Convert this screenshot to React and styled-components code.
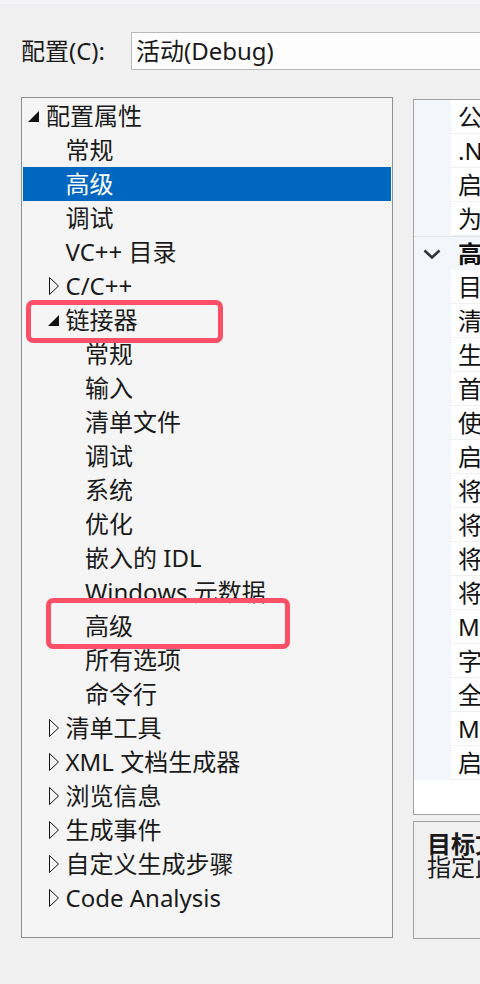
import React from "react";
import styled, { createGlobalStyle } from "styled-components";

const Global = createGlobalStyle`
  html, body { margin: 0; padding: 0; overflow: hidden; }
  body {
    background: #f0f0f0;
    font-family: "Noto Sans", "Noto Sans CJK SC", sans-serif;
    color: #1a1a1a;
  }
`;

const Page = styled.div`
  width: 480px;
  height: 984px;
  overflow: hidden;
  position: relative;
  display: flex;
  flex-direction: column;
`;

const TopStrip = styled.div`
  height: 4px;
  background: #f6f6f9;
`;

const ConfigRow = styled.div`
  display: flex;
  align-items: center;
  margin-top: 28px;
  padding-left: 21px;
  height: 38px;
  width: 720px;
`;

const Label = styled.div`
  width: 110px;
  font-size: 24px;
  line-height: 38px;
`;

const Input = styled.div`
  flex: 1;
  height: 36px;
  border: 1px solid #b9b9b9;
  background: #fdfdfd;
  font-size: 24px;
  line-height: 36px;
  padding-left: 4px;
`;

const Main = styled.div`
  display: flex;
  gap: 20px;
  margin-top: 27px;
  padding-left: 21px;
  width: 720px;
`;

const TreePanel = styled.div`
  flex: 0 0 372px;
  height: 841px;
  box-sizing: border-box;
  border: 1px solid #8e8f94;
  background: #f5f5f5;
  padding: 1px;
`;

const Row = styled.div`
  height: 34px;
  display: flex;
  align-items: center;
  padding-left: ${(p) => 4 + p.$level * 19.5}px;
  background: ${(p) => (p.$selected ? "#0067c0" : "transparent")};
  color: ${(p) => (p.$selected ? "#ffffff" : "#1a1a1a")};
  font-size: 24px;
  white-space: nowrap;
`;

const Expander = styled.span`
  width: 19px;
  flex: 0 0 19px;
  display: flex;
  align-items: center;
`;

const RowText = styled.span`
  line-height: 34px;
`;

const RightCol = styled.div`
  display: flex;
  flex-direction: column;
  gap: 6px;
  margin-top: 2px;
  width: 300px;
`;

const Grid = styled.div`
  height: 716px;
  box-sizing: border-box;
  border: 1px solid #a3a3a3;
  background: #ffffff;
  display: flex;
  flex-direction: column;
`;

const PropRow = styled.div`
  height: 34px;
  display: flex;
  box-sizing: border-box;
  border-top: ${(p) => (p.$header ? "1px solid #e3e3e3" : "none")};
  background: ${(p) => (p.$header ? "#f3f6fb" : "transparent")};
  font-size: 24px;
  font-weight: ${(p) => (p.$header ? 700 : 400)};
`;

const Gutter = styled.div`
  width: 37px;
  flex: 0 0 37px;
  background: #f3f6fb;
  display: flex;
  align-items: center;
  justify-content: center;
`;

const Cell = styled.div`
  flex: 1;
  padding-left: 7px;
  line-height: 33px;
  white-space: nowrap;
  overflow: hidden;
  border-bottom: ${(p) => (p.$header ? "none" : "1px solid #f0f0f0")};
  color: #111;
`;

const Desc = styled.div`
  height: 118px;
  box-sizing: border-box;
  border: 1px solid #a3a3a3;
  padding: 10px 0 0 13px;
  font-size: 24px;
  line-height: 23px;
  white-space: nowrap;
  overflow: hidden;
`;

const DescTitle = styled.div`
  font-weight: 700;
`;

const Mark = styled.div`
  position: absolute;
  left: ${(p) => p.$x}px;
  top: ${(p) => p.$y}px;
  width: ${(p) => p.$w}px;
  height: ${(p) => p.$h}px;
  box-sizing: border-box;
  border: 5px solid #fb5067;
  border-radius: 7px;
  pointer-events: none;
`;

const Filled = () => (
  <svg width="11" height="11" viewBox="0 0 11 11" style={{ marginLeft: 1 }}>
    <polygon points="11,0 11,11 0,11" fill="#111" />
  </svg>
);

const Outline = () => (
  <svg width="11" height="18" viewBox="0 0 11 18" style={{ marginLeft: 2 }}>
    <polygon points="0.5,0.5 9.5,9 0.5,17.5" fill="none" stroke="#111" strokeWidth="1" />
  </svg>
);

const Chevron = () => (
  <svg width="18" height="10" viewBox="0 0 18 10" style={{ marginLeft: -2 }}>
    <polyline points="1.5,1.5 9,8.5 16.5,1.5" fill="none" stroke="#333" strokeWidth="2.6" />
  </svg>
);

const tree = [
  { l: 0, t: "配置属性", e: "open" },
  { l: 1, t: "常规" },
  { l: 1, t: "高级", s: true },
  { l: 1, t: "调试" },
  { l: 1, t: "VC++ 目录" },
  { l: 1, t: "C/C++", e: "closed" },
  { l: 1, t: "链接器", e: "open" },
  { l: 2, t: "常规" },
  { l: 2, t: "输入" },
  { l: 2, t: "清单文件" },
  { l: 2, t: "调试" },
  { l: 2, t: "系统" },
  { l: 2, t: "优化" },
  { l: 2, t: "嵌入的 IDL" },
  { l: 2, t: "Windows 元数据" },
  { l: 2, t: "高级" },
  { l: 2, t: "所有选项" },
  { l: 2, t: "命令行" },
  { l: 1, t: "清单工具", e: "closed" },
  { l: 1, t: "XML 文档生成器", e: "closed" },
  { l: 1, t: "浏览信息", e: "closed" },
  { l: 1, t: "生成事件", e: "closed" },
  { l: 1, t: "自定义生成步骤", e: "closed" },
  { l: 1, t: "Code Analysis", e: "closed" },
];

const props = [
  { t: "公共语言运行时支持" },
  { t: ".NET 目标框架版本" },
  { t: "启用托管增量生成" },
  { t: "为 C++/CLI 属性启用 CLR 支持" },
  { t: "高级属性", h: true },
  { t: "目标文件扩展名" },
  { t: "清理时要删除的扩展名" },
  { t: "生成日志文件" },
  { t: "首选生成工具体系结构" },
  { t: "使用调试库" },
  { t: "启用 Unity (JUMBO) 生成" },
  { t: "将内容复制到 OutDir" },
  { t: "将项目引用复制到 OutDir" },
  { t: "将项目引用的符号复制到 OutDir" },
  { t: "将 C++ 运行时复制到输出目录" },
  { t: "MFC 的使用" },
  { t: "字符集" },
  { t: "全程序优化" },
  { t: "MSVC 工具集版本" },
  { t: "启用 MSVC 结构化输出" },
];

export default function App() {
  return (
    <>
      <Global />
      <Page>
        <TopStrip />
        <ConfigRow>
          <Label>配置(C):</Label>
          <Input>活动(Debug)</Input>
        </ConfigRow>
        <Main>
          <TreePanel>
            {tree.map((r, i) => (
              <Row key={i} $level={r.l} $selected={r.s}>
                <Expander>
                  {r.e === "open" && <Filled />}
                  {r.e === "closed" && <Outline />}
                </Expander>
                <RowText>{r.t}</RowText>
              </Row>
            ))}
          </TreePanel>
          <RightCol>
            <Grid>
              {props.map((p, i) => (
                <PropRow key={i} $header={p.h}>
                  <Gutter>{p.h && <Chevron />}</Gutter>
                  <Cell $header={p.h}>{p.t}</Cell>
                </PropRow>
              ))}
            </Grid>
            <Desc>
              <DescTitle>目标文件扩展名</DescTitle>
              <div>指定此项目生成的文件的扩展名。</div>
            </Desc>
          </RightCol>
        </Main>
        <Mark $x={26} $y={300} $w={197} $h={43} />
        <Mark $x={46} $y={598} $w={244} $h={51} />
      </Page>
    </>
  );
}
